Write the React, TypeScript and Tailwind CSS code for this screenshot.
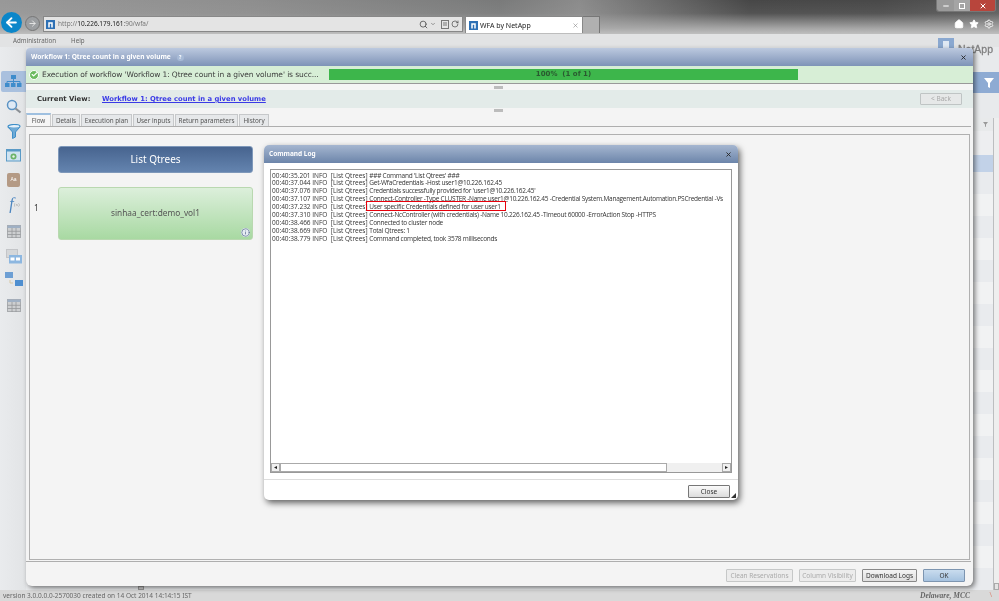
import React from "react";
import { Search, RotateCw, Home, Star, Settings, ChevronDown, X, Minus, ArrowLeft, ArrowRight, Check, Info } from "lucide-react";

const Logo = ({ s = 12 }: { s?: number }) => (
  <svg width={s} height={s} viewBox="0 0 12 12" className="shrink-0">
    <rect width="12" height="12" fill="#2d70b5" />
    <path d="M3 10V3h6v7H7V5H5v5z" fill="#fff" />
  </svg>
);

const TableIcon = () => (
  <svg width="14" height="13" viewBox="0 0 14 13" className="my-auto">
    <rect x="0.5" y="0.5" width="13" height="12" fill="#cdcfd1" stroke="#a8abae" />
    <rect x="0.5" y="0.5" width="13" height="2.500" fill="#9fb0c4" />
    <path d="M5 3v10M9 3v10M0.5 6.300h13M0.5 9.500h13" stroke="#95989b" strokeWidth="0.8" />
  </svg>
);

const tabs = [
  ["Flow", "w-[25px]"],
  ["Details", "w-[28px]"],
  ["Execution plan", "w-[51px]"],
  ["User inputs", "w-[41px]"],
  ["Return parameters", "w-[63px]"],
  ["History", "w-[30px]"],
];

const logs = [
  ["00:40:35.201", "### Command 'List Qtrees' ###"],
  ["00:40:37.044", "Get-WfaCredentials -Host user1@10.226.162.45"],
  ["00:40:37.076", "Credentials successfully provided for 'user1@10.226.162.45'"],
  ["00:40:37.107", "Connect-Controller -Type CLUSTER -Name user1@10.226.162.45 -Credential System.Management.Automation.PSCredential -Vs"],
  ["00:40:37.232", "User specific Credentials defined for user user1"],
  ["00:40:37.310", "Connect-NcController (with credentials) -Name 10.226.162.45 -Timeout 60000 -ErrorAction Stop -HTTPS"],
  ["00:40:38.466", "Connected to cluster node"],
  ["00:40:38.669", "Total Qtrees: 1"],
  ["00:40:38.779", "Command completed, took 3578 milliseconds"],
];

const SideIcons = () => (
  <div className="flex flex-col items-center pt-[24px] pl-[1px]">
    <div className="w-[25px] h-[21px] bg-[#a9c0de] rounded-l-[2px] flex items-center justify-center">
      <svg width="17" height="13" viewBox="0 0 17 13">
        <rect x="6" y="0" width="5" height="4" fill="#3f8ccb" />
        <rect x="0" y="8" width="4.500" height="4" fill="#3f8ccb" />
        <rect x="6" y="8" width="4.500" height="4" fill="#3f8ccb" />
        <rect x="12" y="8" width="4.500" height="4" fill="#3f8ccb" />
        <path d="M8.500 4v4M2 8V6.500h13V8" stroke="#3f8ccb" fill="none" />
      </svg>
    </div>
    <svg width="16" height="16" viewBox="0 0 16 16" className="mt-[7px]">
      <circle cx="6" cy="6" r="4.500" fill="#dfeaf5" stroke="#5b93c4" strokeWidth="1.500" />
      <path d="M9.500 9.500l5 4" stroke="#8a8f94" strokeWidth="2.200" />
    </svg>
    <svg width="14" height="15" viewBox="0 0 14 15" className="mt-[9px]">
      <ellipse cx="7" cy="2.500" rx="6" ry="2" fill="#e6f1fa" stroke="#3f8fc8" strokeWidth="1.200" />
      <path d="M1.500 3.500L5.500 8v6.500L8.500 13V8l4-4.500" fill="#6eaad6" stroke="#3f8fc8" />
    </svg>
    <svg width="15" height="13" viewBox="0 0 15 13" className="mt-[10px]">
      <rect x="0.500" y="0.500" width="14" height="11.500" fill="#cfe3f1" stroke="#5a9ac6" />
      <rect x="0.500" y="0.500" width="14" height="2" fill="#5a9ac6" />
      <circle cx="7.500" cy="7.500" r="3" fill="#6cb36a" />
      <circle cx="7.500" cy="7.500" r="1.200" fill="#e8f3e8" />
    </svg>
    <div className="mt-[11px] w-[13px] h-[14px] bg-[#b49a85] rounded-[2px] flex items-center justify-center text-[5px] text-white font-['Liberation_Sans',sans-serif]">Aa</div>
    <div className="mt-[9px] h-[16px] flex items-center pl-[2px] text-[#4d86c0] italic text-[16px] leading-none font-['Liberation_Serif',serif]">
      f<span className="not-italic text-[5px] text-[#999]">(x)</span>
    </div>
    <div className="h-[13px] mt-[13px] flex"><TableIcon /></div>
    <svg width="16" height="15" viewBox="0 0 16 15" className="mt-[11px]">
      <rect x="0.500" y="0.500" width="11" height="8" fill="#d5d7d9" stroke="#c3c5c8" />
      <rect x="3" y="6" width="13" height="8.500" fill="#8db7e0" />
      <rect x="4.500" y="8.500" width="4" height="3" fill="#fff" />
      <rect x="10" y="8.500" width="4" height="3" fill="#fff" />
    </svg>
    <svg width="18" height="15" viewBox="0 0 18 15" className="mt-[8px]">
      <rect x="0" y="0" width="8" height="6" fill="#6d9fd4" />
      <rect x="10" y="8" width="8" height="6" fill="#4f8fd0" />
      <path d="M5 8v3h3" stroke="#d9c9a4" fill="none" />
    </svg>
    <div className="h-[13px] mt-[12px] flex"><TableIcon /></div>
  </div>
);

const RightStrip = () => (
  <div className="flex-1 min-w-0 flex flex-col relative">
    <div className="h-[25px] shrink-0" />
    <div className="h-[21px] shrink-0 bg-[#8eabd3] flex items-center justify-end pr-[5px]">
      <svg width="10" height="10" viewBox="0 0 10 10"><path d="M0 0h10L6 5v5L4 9V5z" fill="#fff" /></svg>
    </div>
    <div className="h-[25px] shrink-0" />
    <div className="flex-1 min-h-0 flex">
      <div className="flex-1 min-w-0 flex flex-col">
        <div className="h-[13px] shrink-0 flex items-center justify-end pr-[5px] bg-[#e8eaeb]">
          <svg width="5" height="5" viewBox="0 0 10 10"><path d="M0 0h10L6 5v5L4 9V5z" fill="#999" /></svg>
        </div>
        <div className="h-[24px] shrink-0 bg-[#edeef0]" />
        <div className="h-[17px] shrink-0 bg-[#c2d2e8]" />
        <div className="flex-1 min-h-0 bg-[repeating-linear-gradient(180deg,#e9ebee_0px,#e9ebee_22px,#f1f2f3_22px,#f1f2f3_44px)]" />
      </div>
      <div className="w-[6px] shrink-0 border-l border-[#bcbec0] bg-[#eeeeee] flex flex-col justify-end">
        <div className="h-[7px] border border-[#aaa] bg-[#e4e4e4]" />
      </div>
    </div>
  </div>
);

export default function App() {
  return (
    <div className="relative w-[999px] h-[601px] overflow-hidden flex flex-col bg-[#e8eaec] text-[#333] font-['Noto_Sans','Liberation_Sans',sans-serif] blur-[0.45px]">
      {/* browser chrome */}
      <div className="h-[33px] shrink-0 flex flex-col bg-[linear-gradient(90deg,#989898_0%,#8d8d8d_25%,#767777_50%,#8a8a8a_58%,#3e3e3e_75%,#404040_88%,#555_100%)] relative">
        <div className="absolute inset-0 bg-[linear-gradient(180deg,rgba(150,150,150,0.1)_0%,rgba(165,165,165,0.2)_40%,rgba(170,170,170,0.95)_85%,#bbb_100%)]" />
        <div className="relative h-[16px] flex justify-end pr-[3px]">
          <div className="h-[12px] w-[60px] flex rounded-b-[3px] border border-t-0 border-[#777] overflow-hidden">
            <div className="w-[17px] bg-[#9a9a9a] flex items-center justify-center"><Minus size={8} color="#fff" strokeWidth={3} /></div>
            <div className="w-[16px] bg-[#a5a5a5] flex items-center justify-center"><span className="w-[6px] h-[6px] border border-white" /></div>
            <div className="flex-1 bg-[#b8453c] flex items-center justify-center"><X size={8} color="#fff" strokeWidth={3} /></div>
          </div>
        </div>
        <div className="relative flex items-start h-[17px]">
          <div className="ml-[43px] w-[420px] h-[16px] bg-[#e4e4e4] border border-[#888] flex items-center pl-[2px] pr-[1px]">
            <Logo s={9} />
            <span className="ml-[3px] text-[6.500px] leading-none text-[#777] whitespace-pre">http://<span className="text-[#222]">10.226.179.161</span>:90/wfa/</span>
            <div className="ml-auto flex items-center gap-[2px] text-[#444]">
              <Search size={9} />
              <ChevronDown size={6} className="mr-[3px]" />
              <svg width="8" height="9" viewBox="0 0 8 9"><rect x="0.500" y="0.500" width="7" height="8" fill="none" stroke="#777" /><path d="M2 3h4M2 5h4" stroke="#777" /></svg>
              <RotateCw size={8} className="mr-[2px]" />
            </div>
          </div>
          <div className="ml-[2px] w-[118px] h-[17px] bg-white border border-[#888] border-b-0 flex items-center pl-[3px] pr-[3px]">
            <Logo s={9} />
            <span className="ml-[2px] text-[7px] leading-none text-[#222]">WFA by NetApp</span>
            <X size={7} className="ml-auto text-[#888]" />
          </div>
          <div className="w-[17px] h-[17px] bg-[#b0b0b0] border border-[#777] border-b-0 border-l-0" />
          <div className="ml-auto flex items-center gap-[5px] pr-[5px] pt-[3px] text-white">
            <Home size={10} fill="#fff" />
            <Star size={10} fill="#fff" />
            <Settings size={10} />
          </div>
        </div>
        <div className="absolute left-[1px] top-[12px] w-[21px] h-[21px] rounded-full bg-[#0b86c9] flex items-center justify-center">
          <ArrowLeft size={15} color="#fff" strokeWidth={3} />
        </div>
        <div className="absolute left-[25px] top-[16px] w-[15px] h-[15px] rounded-full bg-[#9b9ea1] border border-[#777] flex items-center justify-center">
          <ArrowRight size={9} color="#e6e6e6" strokeWidth={2.500} />
        </div>
      </div>

      {/* menu bar */}
      <div className="h-[14px] shrink-0 bg-[#e2e3e4] border-t border-[#bdbdbd] flex items-center gap-[15px] pl-[13px] text-[6.200px] text-[#666] relative">
        <span>Administration</span>
        <span>Help</span>
        <div className="absolute left-[938px] top-[4px] flex items-start gap-[4px]">
          <div className="w-[16px] h-[16px] bg-[#8aa8d0] flex justify-center pt-[3px]"><span className="w-[6px] h-[8px] bg-[#dfe8f3]" /></div>
          <span className="mt-[4px] text-[10.500px] leading-[14px] text-[#808080] font-['Liberation_Sans',sans-serif] [-webkit-text-stroke:0.3px_#808080]">NetApp</span>
        </div>
      </div>

      {/* main */}
      <div className="flex-1 min-h-0 flex">
        <div className="w-[26px] shrink-0 bg-[linear-gradient(90deg,#e9ebed,#e2e4e6)]">
          <SideIcons />
        </div>

        {/* workflow dialog */}
        <div className="relative z-10 w-[947px] h-[538px] mt-[1px] shrink-0 bg-[#f4f4f4] rounded-b-[6px] rounded-t-[4px] flex flex-col shadow-[2px_2px_5px_rgba(0,0,0,0.5)]">
          <div className="h-[18px] shrink-0 rounded-t-[4px] bg-[linear-gradient(180deg,#bcc9df,#7e93b7)] flex items-center pl-[5px] pr-[6px] text-[6.600px] font-bold text-white">
            <span>Workflow 1: Qtree count in a given volume</span>
            <span className="ml-[6px] w-[7px] h-[7px] rounded-full bg-[#a7bad6] text-[5px] leading-[7px] text-center">?</span>
            <X size={7} strokeWidth={3} className="ml-auto text-[#222]" />
          </div>
          <div className="h-[18px] shrink-0 bg-[#d7eed6] border-b border-[#999] flex items-center pl-[3px]">
            <div className="w-[10px] h-[10px] rounded-full bg-[#6dbb60] border border-white flex items-center justify-center"><Check size={7} color="#fff" strokeWidth={4} /></div>
            <span className="ml-[3px] w-[283px] text-[7.500px] font-medium text-[#3c3c3c] whitespace-nowrap font-['DejaVu_Sans',sans-serif] tracking-[-0.1px]">Execution of workflow 'Workflow 1: Qtree count in a given volume' is succ...</span>
            <div className="ml-[4px] w-[469px] h-[11px] bg-[#3db64b] flex items-center justify-center text-[7px] font-bold text-[#2a5a30] whitespace-pre font-['DejaVu_Sans',sans-serif]">100%  (1 of 1)</div>
          </div>
          <div className="h-[6px] shrink-0 bg-[#f5f5f5] flex justify-center items-center"><span className="w-[9px] h-[3px] bg-[#bcbcbc] ml-[-2px]" /></div>
          <div className="h-[18px] shrink-0 bg-[#e3ebe9] flex items-center pl-[11px] pr-[11px]">
            <span className="w-[65px] text-[6.900px] font-bold text-[#333] font-['DejaVu_Sans',sans-serif]">Current View:</span>
            <a className="text-[6.800px] font-bold text-[#3a3ae6] underline whitespace-nowrap font-['DejaVu_Sans',sans-serif]">Workflow 1: Qtree count in a given volume</a>
            <div className="ml-auto w-[42px] h-[12px] bg-[#e6e8e8] border border-[#bfc4c4] rounded-[1px] flex items-center justify-center text-[6.500px] text-[#aaa]">&lt; Back</div>
          </div>
          <div className="h-[5px] shrink-0 flex justify-center items-center"><span className="w-[9px] h-[3px] bg-[#bcbcbc] ml-[-2px]" /></div>
          <div className="h-[13px] shrink-0 flex items-end text-[6.300px] text-[#555]">
            {tabs.map(([t, w], i) => (
              <div key={t} className={`${w} ${i === 0 ? "h-[13px] bg-[#f6f6f6] border-t-[#9fc0e0] border-t-2 border-x border-x-[#ccc]" : "h-[12px] bg-[#e6e8ea] border border-b-0 border-[#c6c8ca] ml-[1px]"} flex items-center justify-center whitespace-nowrap shrink-0`}>{t}</div>
            ))}
          </div>
          <div className="h-[436px] shrink-0 mr-[2px] border-b border-t border-[#aeaeae] flex flex-col pt-[7px] pl-[3px] pr-[1px] pb-[1px]">
            <div className="flex-1 min-h-0 border border-[#b0b0b0] flex pl-[28px] pt-[11px]">
              <div className="w-[195px]">
                <div className="h-[27px] rounded-[3px] bg-[linear-gradient(180deg,#47648f,#6484af)] border border-[#7e98ba] flex items-center justify-center text-[10px] text-white">List Qtrees</div>
                <div className="relative mt-[14px] h-[53px] rounded-[3px] bg-[linear-gradient(180deg,#dcefdb,#a8d9a2)] border border-[#b9d8b0] flex items-center justify-center text-[8.300px] text-[#555]">
                  sinhaa_cert:demo_vol1
                  <Info size={9} className="absolute right-[2px] bottom-[2px] text-[#5a6f90] bg-[#e6ecf2] rounded-full" />
                  <span className="absolute left-[-25px] top-[14px] text-[8px] text-[#333]">1</span>
                </div>
              </div>
            </div>
          </div>
          <div className="flex-1 min-h-0 flex items-start justify-end gap-[6px] pt-[7px] pr-[8px] text-[6.500px]">
            <div className="w-[67px] h-[13px] border border-[#c6c8c8] bg-[#ececec] rounded-[1px] flex items-center justify-center text-[#aaa] whitespace-nowrap">Clean Reservations</div>
            <div className="w-[57px] h-[13px] border border-[#c6c8c8] bg-[#ececec] rounded-[1px] flex items-center justify-center text-[#aaa] whitespace-nowrap">Column Visibility</div>
            <div className="w-[55px] h-[13px] border border-[#888] bg-[linear-gradient(180deg,#f4f4f4,#dfdfdf)] rounded-[1px] flex items-center justify-center text-[#333] whitespace-nowrap">Download Logs</div>
            <div className="w-[42px] h-[13px] border border-[#7d95b0] bg-[linear-gradient(180deg,#c9dcee,#a5c2df)] rounded-[1px] flex items-center justify-center text-[#333]">OK</div>
          </div>
        </div>

        <RightStrip />
      </div>

      {/* status bar */}
      <div className="h-[11px] shrink-0 bg-[#d9d9d9] flex items-center pl-[3px] pr-[13px] text-[6.500px] text-[#666] relative">
        <span>version 3.0.0.0.0-2570030 created on 14 Oct 2014 14:14:15 IST</span>
        <span className="ml-auto mr-[16px] font-bold italic text-[#666] font-['Liberation_Serif',serif] text-[7.500px]">Delaware, MCC</span>
        <span className="absolute right-[7px] text-[#d98a7a] text-[7px]">\</span>
        <div className="absolute left-[138px] top-[-4px] w-[6px] h-[4px] bg-[#ccc] border border-[#999]" />
      </div>

      {/* command log */}
      <div className="absolute left-[264px] top-[145px] z-20 w-[474px] h-[355px] bg-white rounded-[5px] flex flex-col shadow-[2px_3px_6px_rgba(0,0,0,0.6)]">
        <div className="h-[18px] shrink-0 rounded-t-[5px] bg-[linear-gradient(180deg,#a5b6d0,#6c85aa)] flex items-center pl-[5px] pr-[6px] text-[6.500px] font-bold text-white">
          <span>Command Log</span>
          <X size={7} strokeWidth={3} className="ml-auto text-[#222]" />
        </div>
        <div className="mx-[6px] mt-[6px] h-[304px] shrink-0 border border-[#999] bg-white flex flex-col overflow-hidden">
          <div className="flex-1 min-h-0 overflow-hidden pl-[1px] pt-[1.500px] text-[6.500px] leading-[7.900px] text-[#333] font-['Open_Sans','Noto_Sans',sans-serif] whitespace-pre">
            {logs.map(([t, m]) => (
              <div key={t} className="h-[7.900px]">
                {t} INFO  [List Qtrees]{" "}
                <span className="relative tracking-[-0.25px]">
                  {t === "00:40:37.232" && <span className="absolute left-[-3px] right-[-5px] top-[-1px] h-[10px] border border-solid border-red-600" />}
                  {m}
                </span>
              </div>
            ))}
          </div>
          <div className="h-[9px] shrink-0 bg-[#f0f0f0] flex items-stretch">
            <div className="w-[9px] border border-[#aaa] bg-[#f0f0f0] flex items-center justify-center"><span className="text-[5px] leading-none text-[#222]">◄</span></div>
            <div className="w-[387px] border border-[#aaa] bg-white" />
            <div className="flex-1" />
            <div className="w-[9px] border border-[#aaa] bg-[#f0f0f0] flex items-center justify-center"><span className="text-[5px] leading-none text-[#222]">►</span></div>
          </div>
        </div>
        <div className="mt-[6px] border-t border-[#ddd] flex-1 min-h-0 flex justify-end pt-[5px] pr-[8px] relative">
          <div className="w-[42px] h-[13px] border border-[#777] rounded-[1px] bg-[linear-gradient(180deg,#fafafa,#dcdcdc)] flex items-center justify-center text-[6.500px] text-[#333]">Close</div>
          <div className="absolute right-[2px] bottom-[2px] w-0 h-0 border-l-[5px] border-l-transparent border-b-[5px] border-b-[#333]" />
        </div>
      </div>
    </div>
  );
}
